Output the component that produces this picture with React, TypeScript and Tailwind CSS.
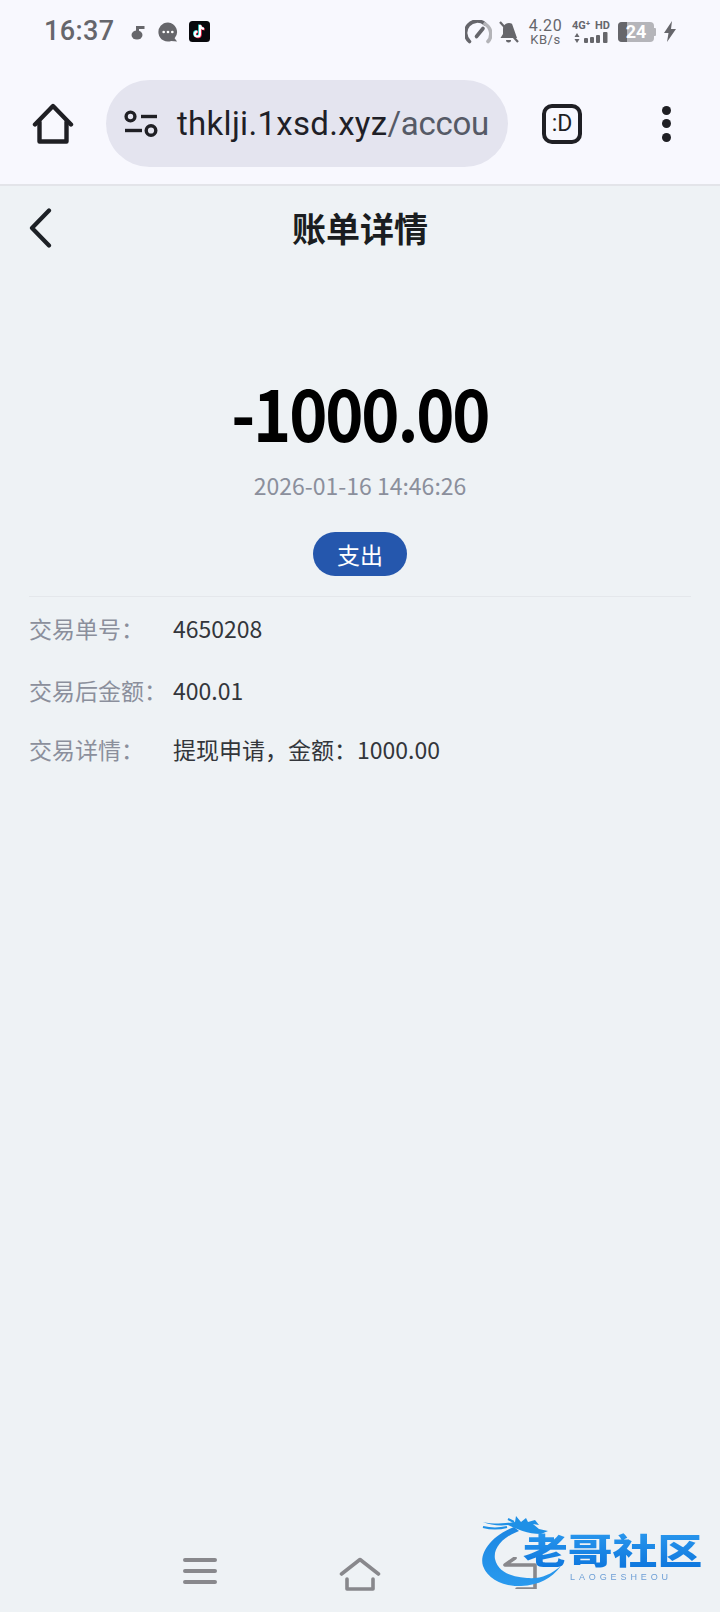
const cjk = "font-['Noto_Sans_CJK_SC','Noto_Sans',sans-serif]";

function Row({ label, value, className }: { label: string; value: string; className: string }) {
  return (
    <div className={`flex items-center text-[23px] leading-[32px] ${className}`}>
      <span className="w-[144px] shrink-0 text-[#8b8f9c]">{label}</span>
      <span className="text-[#33363b]">{value}</span>
    </div>
  );
}

function StatusBar() {
  return (
    <div className="flex h-[62px] items-center justify-between pl-[44px] pr-[44px] pt-[1px] text-[#5f5f66]">
      <div className="flex items-center">
        <span className="font-['Roboto',sans-serif] text-[27px] font-medium leading-none tracking-[0.4px] text-[#66666c]">16:37</span>
        <svg className="ml-[16px]" width="14" height="16" viewBox="0 0 14 16" fill="#66666b">
          <ellipse cx="6" cy="11" rx="5.500" ry="4.500" />
          <path d="M5 8V2h8.500v3H8v4z" />
        </svg>
        <svg className="ml-[12px]" width="22" height="22" viewBox="0 0 23 22">
          <path d="M11.500 1a10 10 0 1 0 3.400 19.400L21 21l-2.600-3.400A10 10 0 0 0 11.500 1z" fill="#66666b" />
          <circle cx="7" cy="11" r="1.400" fill="#fff" />
          <circle cx="11.500" cy="11" r="1.400" fill="#fff" />
          <circle cx="16" cy="11" r="1.400" fill="#fff" />
        </svg>
        <svg className="ml-[10px]" width="21" height="21" viewBox="0 0 21 21">
          <rect width="21" height="21" rx="3.500" fill="#08080c" />
          <path d="M11 4v9a2.600 2.600 0 1 1-2.600-2.600M11 4c.3 2.200 1.800 3.600 4 3.800" fill="none" stroke="#ff2f55" strokeWidth="2.200" transform="translate(.7 .5)" />
          <path d="M11 4v9a2.600 2.600 0 1 1-2.600-2.600M11 4c.3 2.200 1.800 3.600 4 3.800" fill="none" stroke="#36e6e6" strokeWidth="2.200" transform="translate(-.7 -.4)" />
          <path d="M11 4v9a2.600 2.600 0 1 1-2.600-2.600M11 4c.3 2.200 1.800 3.600 4 3.800" fill="none" stroke="#fff" strokeWidth="2" />
        </svg>
      </div>
      <div className="flex items-center">
        <svg width="27" height="24" viewBox="0 0 27 24" fill="none">
          <path d="M4.500 21.500A11.500 11.500 0 0 1 20 4" stroke="#66666b" strokeWidth="3.600" strokeLinecap="round" />
          <path d="M20 4a11.500 11.500 0 0 1 3 17.500" stroke="#b4b4b8" strokeWidth="3.600" strokeLinecap="round" />
          <path d="M11.500 16.500 18 8.500" stroke="#66666b" strokeWidth="3.600" strokeLinecap="round" />
        </svg>
        <svg className="ml-[6px]" width="22" height="24" viewBox="0 0 22 24" fill="#66666b">
          <path d="M5 9a6 6 0 0 1 9-5.200L19 18H2.500L5 14z" />
          <path d="M8 20h5a2.500 2.500 0 0 1-5 0z" />
          <path d="M2 2l18 20" stroke="#66666b" strokeWidth="2.200" />
        </svg>
        <div className="ml-[9px] flex w-[33px] flex-col items-center font-['Roboto',sans-serif] leading-none text-[#66666c]">
          <span className="text-[16px] tracking-[0.6px]">4.20</span>
          <span className="mt-[-1px] text-[13px] tracking-[0.6px]">KB/s</span>
        </div>
        <div className="ml-[10px] flex w-[38px] flex-col font-['Roboto',sans-serif] leading-none text-[#66666c]">
          <span className="flex justify-between text-[11px] font-bold"><span>4G⁺</span><span>HD</span></span>
          <svg className="mt-[1px]" width="38" height="12" viewBox="0 0 38 12" fill="#66666b">
            <path d="M2.500 5 5 1l2.500 4zM2.500 7 5 11l2.500-4z" />
            <rect x="12" y="6" width="4" height="5" rx="1" />
            <rect x="18" y="5" width="4" height="6" rx="1" />
            <rect x="24" y="3" width="4" height="8" rx="1" />
            <rect x="31" y="0" width="4.500" height="11" rx="1" />
          </svg>
        </div>
        <div className="ml-[8px] flex items-center">
          <div className="relative flex h-[20px] w-[36px] items-center justify-center overflow-hidden rounded-[4px] bg-[#b5b5ba]">
            <div className="absolute inset-y-0 left-0 w-[9px] bg-[#66666b]" />
            <span className="relative font-['Roboto',sans-serif] text-[18px] font-bold leading-none text-white">24</span>
          </div>
          <div className="h-[8px] w-[2px] rounded-r-[1px] bg-[#b5b5ba]" />
        </div>
        <svg className="ml-[8px]" width="12" height="21" viewBox="0 0 12 21" fill="#66666b">
          <path d="M8 0 0 12h4.500L3 21l9-13H7z" />
        </svg>
      </div>
    </div>
  );
}

function BrowserBar() {
  return (
    <div className="flex h-[124px] items-start border-b-2 border-[#e3e4e9] pt-[18px]">
      <div className="flex h-[87px] w-[106px] items-center justify-center">
        <svg width="42" height="41" viewBox="0 0 42 41" fill="none" stroke="#1f1f24" strokeWidth="4.400" strokeLinejoin="round" strokeLinecap="round">
          <path d="M3 21.500 21 3l18 18.500" />
          <path d="M7.500 19v19.500h27V19" />
        </svg>
      </div>
      <div className="flex h-[87px] w-[402px] items-center rounded-full bg-[#e4e4ef] pl-[18px] pr-[18px]">
        <svg className="shrink-0" width="34" height="28" viewBox="0 0 34 28" fill="none" stroke="#1f1f24" strokeWidth="3.400">
          <circle cx="6.500" cy="6.500" r="4.400" />
          <path d="M17 6.500h16" />
          <path d="M1 20.500h17" />
          <circle cx="27" cy="20.500" r="4.800" />
        </svg>
        <div className="ml-[19px] whitespace-nowrap font-['Roboto',sans-serif] text-[33px] leading-none tracking-[0.3px]">
          <span className="text-[#1f1f27]">thklji.1xsd.xyz</span>
          <span className="tracking-[-0.3px] text-[#565a66]">/accou</span>
        </div>
      </div>
      <div className="flex h-[87px] w-[108px] items-center justify-center">
        <div className="flex h-[40px] w-[40px] items-center justify-center rounded-[10px] border-[4.500px] border-[#1f1f24] font-['Roboto',sans-serif] text-[23px] leading-none text-[#1f1f24]">
          :D
        </div>
      </div>
      <div className="flex h-[87px] flex-1 flex-col items-center justify-center gap-[4.500px] pr-[4px]">
        <div className="h-[9px] w-[9px] rounded-full bg-[#1f1f24]" />
        <div className="h-[9px] w-[9px] rounded-full bg-[#1f1f24]" />
        <div className="h-[9px] w-[9px] rounded-full bg-[#1f1f24]" />
      </div>
    </div>
  );
}

function Watermark() {
  return (
    <div className="absolute left-[480px] top-[1514px] h-[80px] w-[230px] blur-[0.7px]">
      <svg className="absolute left-0 top-0" width="120" height="78" viewBox="0 0 120 78" fill="none">
        <defs>
          <linearGradient id="dr" x1="0" y1="0" x2="0" y2="1">
            <stop offset="0" stopColor="#1b86e2" />
            <stop offset="1" stopColor="#2a9aee" />
          </linearGradient>
        </defs>
        <path d="M34 13C10 22-1 40 3 52c5 14 22 21 38 20 18-1 30-7 40-20-11 9-20 13-34 12-16-1-29-6-32-19-2-11 8-22 24-28z" fill="url(#dr)" />
        <path d="M3 8c7 3 16 4 25 3 8 4 20 9 33 9l7-3-9-2-6-5 6 1-4-5-7 2-2-4-5 4-5-6-1 6C24 10 12 10 3 8z" fill="#1f90e6" />
        <path d="M28 5l6 3M3 13c8 2 16 2 24 0" stroke="#1f90e6" strokeWidth="2" />
      </svg>
      <div className="absolute left-[43px] top-[13px] h-[44px] w-[190px] origin-left scale-x-[1.28] whitespace-nowrap bg-gradient-to-b from-[#2c9bef] to-[#0b74dc] bg-clip-text text-[35px] font-black leading-[44px] text-transparent">
        老哥社区
      </div>
      <div className="absolute left-[90px] top-[59px] whitespace-nowrap font-['Liberation_Sans',sans-serif] text-[9px] leading-none tracking-[3.900px] text-[#6d9fd6]">
        LAOGESHEOU
      </div>
    </div>
  );
}

function NavBar() {
  return (
    <div className="mt-auto flex h-[55px] items-start justify-center gap-[122px]">
      <svg width="34" height="28" viewBox="0 0 34 28" fill="none" stroke="#88888c" strokeWidth="4" strokeLinecap="round">
        <path d="M2 3h30M2 14h30M2 25h30" />
      </svg>
      <svg width="42" height="34" viewBox="0 0 42 34" fill="none" stroke="#88888c" strokeWidth="3.600" strokeLinecap="round" strokeLinejoin="round">
        <path d="M2.500 17 21 2.500 39.500 17" />
        <path d="M8 22v10h26V22" />
      </svg>
      <svg width="34" height="32" viewBox="0 0 34 32" fill="none" stroke="#88888c" strokeWidth="3.600" strokeLinecap="round" strokeLinejoin="round">
        <path d="M12 1 2 8h30v24H14" />
      </svg>
    </div>
  );
}

export default function App() {
  return (
    <div className={`relative flex h-[1612px] w-[720px] flex-col overflow-hidden bg-[#eef2f5] ${cjk}`}>
      <div className="bg-[#f8f8fe]">
        <StatusBar />
        <BrowserBar />
      </div>
      <div className="flex h-[84px] items-center px-[29px]">
        <svg width="23" height="40" viewBox="0 0 23 40" fill="none" stroke="#1d2126" strokeWidth="4.200" strokeLinecap="round" strokeLinejoin="round">
          <path d="M20 2.500 3 20l17 17.500" />
        </svg>
        <h1 className="ml-[240px] text-[34px] font-bold leading-none text-[#1a1d20]">账单详情</h1>
      </div>
      <div className="flex flex-col items-center pt-[95px]">
        <div className="scale-x-[0.9] text-[72px] font-bold leading-[92px] tracking-[-2.400px] text-black">-1000.00</div>
        <div className="mt-[12px] text-[23px] leading-[32px] text-[#8b8f9c]">2026-01-16 14:46:26</div>
        <div className="mt-[31px] flex h-[44px] w-[94px] items-center justify-center rounded-full bg-[#2557ad] text-[23px] leading-none text-white">支出</div>
      </div>
      <div className="mx-[29px] mt-[20px] border-t border-[#e4e7eb] pt-[15px]">
        <Row label="交易单号：" value="4650208" className="" />
        <Row label="交易后金额：" value="400.01" className="mt-[30px]" />
        <Row label="交易详情：" value="提现申请，金额：1000.00" className="mt-[27px]" />
      </div>
      <NavBar />
      <Watermark />
    </div>
  );
}
